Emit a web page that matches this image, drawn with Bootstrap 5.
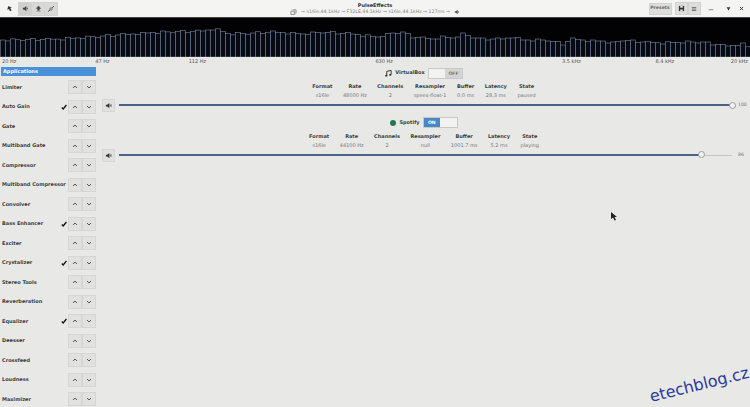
<!DOCTYPE html>
<html lang="en">
<head>
  <meta charset="UTF-8">
  <title>PulseEffects</title>
  <link href="https://cdn.jsdelivr.net/npm/bootstrap@5.3.0/dist/css/bootstrap.min.css" rel="stylesheet">
  <style>
    html, body { height: 100%; }
    body { background: #e8e8e7; font-family: "DejaVu Sans", sans-serif; font-size: 5px; color: #3a3f40; overflow: hidden; position: relative; width: 750px; height: 407px; }
    .titlebar { height: 18px; background: #f4f4f3; border-bottom: 1px solid #444; padding: 0 2.5px 0 3px; }
    .titlebtn { height: 13px; width: 13px; background: #dededd; border: 1px solid #d2d2d1; color: #333; padding: 0; flex: none; }
    .titlebtn.plain { background: transparent; border-color: transparent; }
    .titlegroup { margin-left: 2px; }
    .titlegroup .titlebtn { width: 14px; height: 14px; margin-right: -1px; background: #d9d9d8; }
    .titlegroup .titlebtn.active { background: #cfcfce; }
    .presetbtn { height: 12px; width: 23px; background: #dededd; border: 1px solid #d2d2d1; font-size: 4.6px; font-weight: 700; color: #666; padding: 0; margin-right: 3px; }
    .titlecenter { left: 0; right: 0; top: 1.500px; text-align: center; pointer-events: none; }
    .apptitle { font-weight: 700; font-size: 5px; line-height: 7px; color: #333; }
    .appsub { font-size: 4.7px; line-height: 6px; color: #888; margin-top: 0.500px; }
    .spectrum { display: block; width: 750px; height: 39px; background: #020205; }
    .freqs { height: 9px; line-height: 8px; color: #555; font-size: 5px; padding-left: 2px; padding-right: 2px; }
    .freqs span { width: 93.35px; flex: none; }
    .freqs span:nth-child(8) { width: auto; }
    .freqs span:last-child { flex: 1; width: auto; text-align: right; }
    .sidebar { width: 98px; flex: none; padding: 1px 2px 0 1px; }
    .apphead { height: 9px; line-height: 9px; background: #4a90d9; color: #fff; font-weight: 700; padding-left: 2px; font-size: 5px; margin-bottom: 1.5px; }
    .fxrow { height: 19.5px; }
    .fxname { font-weight: 700; font-size: 5px; color: #3c4142; white-space: nowrap; padding-left: 1px; min-width: 0; }
    .fxcheck { margin-right: 1px; flex: none; }
    .arrowbtn { width: 14px; height: 14px; background: #e1e1e0; border: 1px solid #d6d6d5; padding: 0; color: #555; flex: none; }
    .main { min-width: 0; padding-top: 1px; }
    .streamhead { height: 12px; gap: 3px; font-weight: 700; font-size: 5px; }
    .toggle { width: 35px; height: 11px; border: 1px solid #c8c8c7; background: #d4d4d3; font-size: 4.6px; font-weight: 700; }
    .toggle div { width: 50%; text-align: center; line-height: 9px; }
    .toggle .knob { background: #f2f2f1; }
    .toggle .ison { background: #4a86c8; color: #fff; }
    .toggle .isoff { color: #777; }
    .streamgrid { gap: 0 10.5px; margin-top: 3px; }
    .streamgrid div { text-align: center; line-height: 9px; color: #777; font-size: 5px; white-space: nowrap; }
    .streamgrid b { display: block; color: #3a3f40; font-size: 5px; }
    .sliderrow { height: 14px; padding-left: 4px; margin-top: -1.5px; }
    .mutebtn { width: 13px; height: 13px; background: #e1e1e0; border: 1px solid #d6d6d5; padding: 0; color: #333; margin-right: 4px; flex: none; }
    .track { height: 1px; background: #c4c4c3; flex: 1; position: relative; }
    .trackfill { height: 2px; top: -1px; left: 0; background: #4a6285; position: absolute; }
    .thumb { width: 7px; height: 7px; border-radius: 50%; background: #f4f4f3; border: 1px solid #9a9a99; position: absolute; top: -3.5px; margin-left: -3.5px; }
    .volnum { width: 18px; flex: none; padding-left: 6px; font-size: 4.6px; color: #777; }
    .secondstream { margin-top: 4px; }
    .dot { width: 6px; height: 6px; border-radius: 50%; background: #1f7a52; }
    .watermark { position: absolute; left: 652px; top: 389px; font-family: "DejaVu Sans", sans-serif; font-size: 16px; color: #2a3a9e; transform: rotate(-14deg); transform-origin: left bottom; line-height: 1; white-space: nowrap; }
    .pointer { position: absolute; left: 611px; top: 212px; }
  </style>
</head>
<body>

<div class="titlebar d-flex align-items-center position-relative">
  <button class="titlebtn plain d-flex align-items-center justify-content-center">
    <svg width="7" height="7" viewBox="0 0 8 8"><path d="M4 1 1 4h2v3h2V4h2z" fill="#333" transform="rotate(-30 4 4)"/></svg>
  </button>
  <div class="titlegroup d-flex">
    <button class="titlebtn active d-flex align-items-center justify-content-center">
      <svg width="7" height="7" viewBox="0 0 8 8"><path d="M1 3h1.500L5 1v6L2.500 5H1z" fill="#444"/><path d="M6 3v2" stroke="#444"/></svg>
    </button>
    <button class="titlebtn d-flex align-items-center justify-content-center">
      <svg width="7" height="7" viewBox="0 0 8 8"><path d="M4 1 1.500 4H3v2h2V4h1.500zM1.500 7h5" fill="#444" stroke="#444" stroke-width=".5"/></svg>
    </button>
    <button class="titlebtn d-flex align-items-center justify-content-center">
      <svg width="8" height="8" viewBox="0 0 8 8"><path d="M1 6.500 3 5M5 3l2-2" stroke="#555" fill="none"/><circle cx="4" cy="4" r="1.200" fill="none" stroke="#555" stroke-width=".7"/></svg>
    </button>
  </div>
  <div class="titlecenter position-absolute">
    <div class="apptitle">PulseEffects</div>
    <div class="appsub d-flex justify-content-center align-items-center gap-1">
      <svg width="7" height="6" viewBox="0 0 8 7"><path d="M3 1h4v4H6M1 2.500h4v4H1z" fill="none" stroke="#666" stroke-width=".8"/></svg>
      <span>&rarr; s16le,44.1kHz &rarr; F32LE,44.1kHz &rarr; s16le,44.1kHz &rarr; 127ms &rarr;</span>
      <svg width="6" height="6" viewBox="0 0 8 8"><path d="M1 3h1.500L5 1v6L2.500 5H1z" fill="#555"/><path d="M6 3v2" stroke="#555"/></svg>
    </div>
  </div>
  <div class="ms-auto d-flex align-items-center">
    <button class="presetbtn">Presets</button>
    <button class="titlebtn d-flex align-items-center justify-content-center">
      <svg width="7" height="7" viewBox="0 0 8 8"><path d="M1 1h6v6H1z" fill="#333"/><path d="M2.500 1v2h3V1M2.500 7V5h3v2" fill="#ddd"/></svg>
    </button>
    <button class="titlebtn d-flex align-items-center justify-content-center">
      <svg width="6" height="6" viewBox="0 0 8 8"><path d="M1 2h6M1 4h6M1 6h6" stroke="#555"/></svg>
    </button>
    <button class="titlebtn plain d-flex align-items-center justify-content-center ms-1">
      <svg width="6" height="6" viewBox="0 0 8 8"><path d="M1 5h6" stroke="#666"/></svg>
    </button>
    <button class="titlebtn plain d-flex align-items-center justify-content-center ms-1">
      <svg width="5" height="5" viewBox="0 0 8 8"><path d="M1 2h6L4 7z" fill="#333"/></svg>
    </button>
    <button class="titlebtn plain d-flex align-items-center justify-content-center">
      <svg width="5" height="5" viewBox="0 0 8 8"><path d="M1.500 1.500l5 5M6.500 1.500l-5 5" stroke="#333" stroke-width="1.500"/></svg>
    </button>
  </div>
</div>

<svg id="spectrum" class="spectrum" viewBox="0 0 750 39"></svg>

<div class="freqs d-flex">
  <span>20 Hz</span><span>47 Hz</span><span>112 Hz</span><span></span><span>630 Hz</span><span></span><span>3.5 kHz</span><span>8.4 kHz</span><span>20 kHz</span>
</div>

<div class="d-flex">
  <div class="sidebar">
    <div class="apphead">Applications</div>
    <div id="fxlist"></div>
  </div>

  <div class="main flex-fill">
    <div class="streamhead d-flex justify-content-center align-items-center">
      <svg width="7" height="7" viewBox="0 0 8 8"><path d="M2 6V1.500L7 .5V5" fill="none" stroke="#222"/><ellipse cx="1.500" cy="6.500" rx="1.300" ry="1" fill="#222"/><ellipse cx="6" cy="5.500" rx="1.300" ry="1" fill="#222"/></svg>
      <span>VirtualBox</span>
      <div class="toggle d-flex"><div class="knob"></div><div class="isoff">OFF</div></div>
    </div>
    <div class="streamgrid d-flex justify-content-center">
      <div><b>Format</b>s16le</div>
      <div><b>Rate</b>48000 Hz</div>
      <div><b>Channels</b>2</div>
      <div><b>Resampler</b>speex-float-1</div>
      <div><b>Buffer</b>0.0 ms</div>
      <div><b>Latency</b>28.3 ms</div>
      <div><b>State</b>paused</div>
    </div>
    <div class="sliderrow d-flex align-items-center">
      <button class="mutebtn d-flex align-items-center justify-content-center">
        <svg width="7" height="7" viewBox="0 0 8 8"><path d="M1 3h1.500L5 1v6L2.500 5H1z" fill="#333"/><path d="M6 3v2M7 2.500v3" stroke="#333" stroke-width=".7"/></svg>
      </button>
      <div class="track"><div class="trackfill" style="width:100%"></div><div class="thumb" style="left:100%"></div></div>
      <div class="volnum">100</div>
    </div>

    <div class="secondstream">
      <div class="streamhead d-flex justify-content-center align-items-center">
        <span class="dot"></span>
        <span>Spotify</span>
        <div class="toggle d-flex"><div class="ison">ON</div><div class="knob"></div></div>
      </div>
      <div class="streamgrid d-flex justify-content-center">
        <div><b>Format</b>s16le</div>
        <div><b>Rate</b>44100 Hz</div>
        <div><b>Channels</b>2</div>
        <div><b>Resampler</b>null</div>
        <div><b>Buffer</b>1001.7 ms</div>
        <div><b>Latency</b>5.2 ms</div>
        <div><b>State</b>playing</div>
      </div>
      <div class="sliderrow d-flex align-items-center">
        <button class="mutebtn d-flex align-items-center justify-content-center">
          <svg width="7" height="7" viewBox="0 0 8 8"><path d="M1 3h1.500L5 1v6L2.500 5H1z" fill="#333"/><path d="M6 3v2M7 2.500v3" stroke="#333" stroke-width=".7"/></svg>
        </button>
        <div class="track"><div class="trackfill" style="width:95%"></div><div class="thumb" style="left:95%"></div></div>
        <div class="volnum">86</div>
      </div>
    </div>
  </div>
</div>

<svg class="pointer" width="6" height="9" viewBox="0 0 6 9"><path d="M0 0v7l2-1.500L3.500 8.500 5 8 3.500 5H6z" fill="#222"/></svg>
<div class="watermark">etechblog.cz</div>

<script>
  // spectrum bar tops, sampled by x along the window
  const tops = [[0,22],[60,21],[100,18],[160,14],[200,13],[210,11],[216,12],[226,16],[250,15],[270,14],[300,16],[320,14],[350,16],[375,19],[390,15],[400,14],[410,19],[430,21],[440,19],[450,20],[460,16],[470,19],[480,21],[500,21],[510,19],[520,22],[545,22],[560,26],[570,21],[590,23],[600,23],[610,25],[620,22],[640,24],[660,25],[680,24],[700,24],[710,26],[725,28],[740,26],[749,31]];
  const jitter = [0,1,-1,0,1,0,-1,1,0,-1,0,0,1,-1,0];
  const svg = document.getElementById('spectrum');
  let bars = '';
  for (let i = 0; i < 150; i++) {
    const x = i * 5;
    let k = 0;
    while (k < tops.length - 2 && tops[k + 1][0] < x) k++;
    const [x0, y0] = tops[k], [x1, y1] = tops[k + 1];
    const top = y0 + (y1 - y0) * (x - x0) / (x1 - x0) + jitter[i % 15];
    bars += `<rect x="${x + 0.5}" y="${top}" width="5" height="${39 - top}" fill="#070a12" stroke="#76869e" stroke-width=".6"/>`;
  }
  svg.innerHTML = bars;

  const effects = [
    ['Limiter', false], ['Auto Gain', true], ['Gate', false], ['Multiband Gate', false],
    ['Compressor', false], ['Multiband Compressor', false], ['Convolver', false],
    ['Bass Enhancer', true], ['Exciter', false], ['Crystalizer', true], ['Stereo Tools', false],
    ['Reverberation', false], ['Equalizer', true], ['Deesser', false], ['Crossfeed', false],
    ['Loudness', false], ['Maximizer', false]
  ];
  const up = '<svg width="6" height="4" viewBox="0 0 6 4"><path d="M1 3 3 1l2 2" fill="none" stroke="#555"/></svg>';
  const down = '<svg width="6" height="4" viewBox="0 0 6 4"><path d="M1 1l2 2 2-2" fill="none" stroke="#555"/></svg>';
  const check = '<svg class="fxcheck" width="6" height="6" viewBox="0 0 6 6"><path d="M.8 3.500 2.200 5 5.400 1" fill="none" stroke="#111" stroke-width="1.300"/></svg>';
  const list = document.getElementById('fxlist');
  effects.forEach(([name, on]) => {
    const row = document.createElement('div');
    row.className = 'fxrow d-flex align-items-center';
    row.innerHTML = `
      <span class="fxname flex-fill">${name}</span>
      ${on ? check : ''}
      <button class="arrowbtn d-flex align-items-center justify-content-center">${up}</button>
      <button class="arrowbtn d-flex align-items-center justify-content-center">${down}</button>
    `;
    list.appendChild(row);
  });
</script>

<script src="https://cdn.jsdelivr.net/npm/bootstrap@5.3.0/dist/js/bootstrap.bundle.min.js"></script>
</body>
</html>
